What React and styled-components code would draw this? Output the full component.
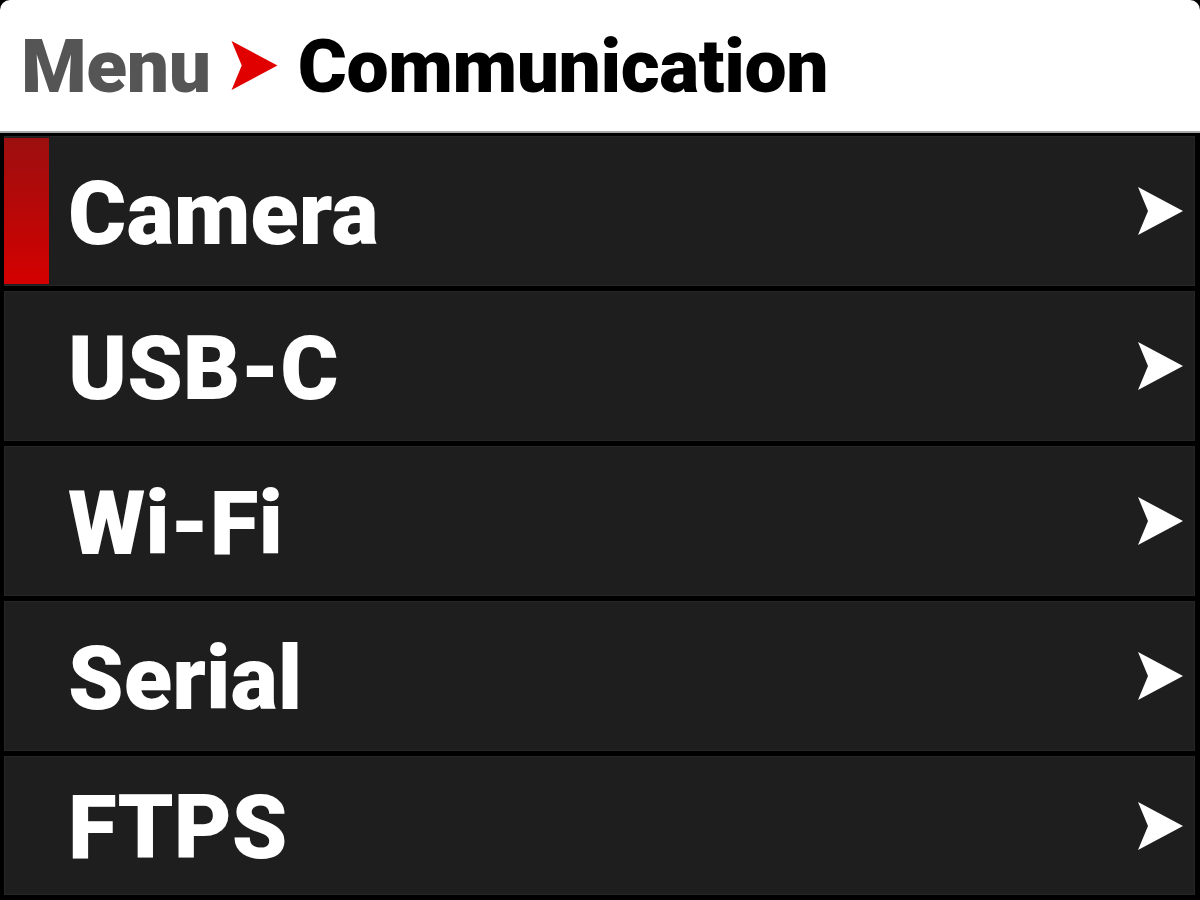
import React from 'react';
import styled, { createGlobalStyle } from 'styled-components';

const GlobalStyle = createGlobalStyle`
  html, body {
    margin: 0;
    padding: 0;
    background: #000;
  }
  * {
    box-sizing: border-box;
  }
`;

const Screen = styled.div`
  width: 1200px;
  height: 900px;
  overflow: hidden;
  background: #000;
  display: flex;
  flex-direction: column;
  font-family: Roboto, "Liberation Sans", sans-serif;
  font-weight: 900;
`;

const Header = styled.div`
  height: 133px;
  flex-shrink: 0;
  background: #fff;
  border-radius: 10px 10px 0 0;
  border-bottom: 2px solid #a8a8a8;
  display: flex;
  align-items: center;
  padding-left: 21px;
  gap: 20px;
  font-size: 75px;
  line-height: 1;
  letter-spacing: -0.4px;
`;

const Crumb = styled.span`
  color: ${props => props.current ? '#000' : '#555'};
  margin-top: 2px;
`;

const List = styled.div`
  flex: 1;
  min-height: 0;
  display: flex;
  flex-direction: column;
  gap: 5px;
  padding: 3px 5px 5px 4px;
`;

const Row = styled.div`
  flex: 0 0 150px;
  position: relative;
  display: flex;
  align-items: center;
  justify-content: space-between;
  padding: 0 12px 0 64px;
  background: #1e1e1e;
  box-shadow: inset 0 0 0 1px #262626;

  &:last-child {
    flex: 1 1 0;
  }
`;

const Selected = styled.div`
  position: absolute;
  left: 0;
  top: 2px;
  bottom: 2px;
  width: 45px;
  background: linear-gradient(to bottom, #9c0f0f, #d40000);
`;

const Label = styled.span`
  color: #fff;
  font-size: 89px;
  line-height: 1;
  margin-top: 4px;
  letter-spacing: 0;
`;

const Arrow = ({ color, width, height }) => (
  <svg width={width} height={height} viewBox="0 0 45 48" style={{ display: 'block' }}>
    <polygon points="0,0 45,24 0,48 10,24" fill={color} />
  </svg>
);

const items = ['Camera', 'USB-C', 'Wi-Fi', 'Serial', 'FTPS'];

const App = () => (
  <>
    <GlobalStyle />
    <Screen>
      <Header>
        <Crumb>Menu</Crumb>
        <Arrow color="#e00000" width={47} height={49} />
        <Crumb current>Communication</Crumb>
      </Header>
      <List>
        {items.map((item, index) => (
          <Row key={item}>
            {index === 0 && <Selected />}
            <Label>{item}</Label>
            <Arrow color="#fff" width={45} height={48} />
          </Row>
        ))}
      </List>
    </Screen>
  </>
);

export default App;
